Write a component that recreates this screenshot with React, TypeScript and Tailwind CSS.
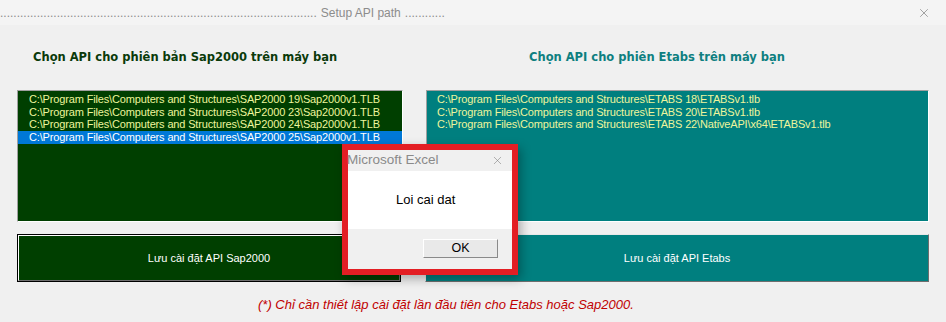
import { X } from 'lucide-react';

const sapPaths = [
  'C:\\Program Files\\Computers and Structures\\SAP2000 19\\Sap2000v1.TLB',
  'C:\\Program Files\\Computers and Structures\\SAP2000 23\\Sap2000v1.TLB',
  'C:\\Program Files\\Computers and Structures\\SAP2000 24\\Sap2000v1.TLB',
  'C:\\Program Files\\Computers and Structures\\SAP2000 25\\Sap2000v1.TLB',
];

const etabsPaths = [
  'C:\\Program Files\\Computers and Structures\\ETABS 18\\ETABSv1.tlb',
  'C:\\Program Files\\Computers and Structures\\ETABS 20\\ETABSv1.tlb',
  'C:\\Program Files\\Computers and Structures\\ETABS 22\\NativeAPI\\x64\\ETABSv1.tlb',
];

const MsgBox = () => (
  <div className="absolute left-[342px] top-[144px] w-[176px] border-[6px] border-[#e31e24] shadow-[3px_4px_10px_rgba(0,0,0,0.3)]">
    <div className="flex h-[21px] items-center justify-between bg-[#f0f0f0] pr-[8px] text-[13.5px] text-[#8a8a8a]">
      <span className="-ml-[1px]">Microsoft Excel</span>
      <X size={13} strokeWidth={1} color="#777" />
    </div>
    <div className="flex h-[58px] items-center bg-white pl-[48px] text-[13px] text-black">
      Loi cai dat
    </div>
    <div className="flex h-[40px] items-start justify-end bg-[#f0f0f0] pr-[14px] pt-[10px]">
      <div className="flex h-[19px] w-[75px] items-center justify-center border-t border-l border-t-white border-l-white border-b border-r border-b-[#8a8a8a] border-r-[#8a8a8a] bg-[#e9e9e9] text-[12.5px] text-black">
        OK
      </div>
    </div>
  </div>
);

export default function App() {
  return (
    <div
      className="relative flex h-[322px] w-[946px] flex-col overflow-hidden bg-[#f0f0f0]"
      style={{ fontFamily: '"Liberation Sans", Arial, sans-serif' }}
    >
      {/* title bar */}
      <div className="flex h-[25px] items-center justify-between bg-[#f4f4f4] pr-[15px] text-[12px] text-[#8c8c8c]">
        <div className="flex items-center whitespace-nowrap">
          <span>{'.'.repeat(95)}</span>
          <span className="px-[4px]">Setup API path</span>
          <span>{'.'.repeat(12)}</span>
        </div>
        <X size={14} strokeWidth={1} color="#666" />
      </div>

      <div className="px-[17px]">
        <div className="grid grid-cols-[386px_503px] gap-x-[23px]">
          {/* headings */}
          <div
            className="mt-[24px] h-[16px] pl-[16px] text-[11.5px] font-bold leading-[16px] text-[#0a3a0a]"
            style={{ fontFamily: '"DejaVu Sans", sans-serif' }}
          >
            Chọn API cho phiên bản Sap2000 trên máy bạn
          </div>
          <div
            className="mt-[24px] h-[16px] pl-[103px] text-[11.5px] font-bold leading-[16px] text-[#0e7f80]"
            style={{ fontFamily: '"DejaVu Sans", sans-serif' }}
          >
            Chọn API cho phiên Etabs trên máy bạn
          </div>

          {/* list boxes */}
          <div className="mt-[25px] h-[132px] border border-t-[#a0a0a0] border-l-[#a0a0a0] border-b-white border-r-white bg-[#003f00] pt-[2px] text-[11px] leading-[12.67px] tracking-[-0.15px] text-[#eef59c]">
            {sapPaths.map((p, i) => (
              <div
                key={p}
                className={`whitespace-nowrap pl-[11px] ${i === 3 ? 'bg-[#0078d7] text-white' : ''}`}
              >
                {p}
              </div>
            ))}
          </div>
          <div className="mt-[25px] h-[132px] border border-t-[#a0a0a0] border-l-[#a0a0a0] border-b-white border-r-white bg-[#007f7f] pt-[2px] text-[11px] leading-[12.67px] tracking-[-0.15px] text-[#eef59c]">
            {etabsPaths.map((p) => (
              <div key={p} className="whitespace-nowrap pl-[10px]">
                {p}
              </div>
            ))}
          </div>

          {/* buttons */}
          <div className="mt-[12px] h-[48px] w-[384px] border border-black">
            <div className="flex h-full items-center justify-center border border-t-white border-l-white border-b-[#6e6e6e] border-r-[#6e6e6e] bg-[#003f00] text-[11px] text-white">
              Lưu cài đặt API Sap2000
            </div>
          </div>
          <div className="mt-[12px] -ml-[1px] flex h-[48px] items-center justify-center border border-t-[#e8e8e8] border-l-[#e8e8e8] border-b-[#6e6e6e] border-r-[#6e6e6e] bg-[#007f7f] text-[11px] text-white">
            Lưu cài đặt API Etabs
          </div>
        </div>

        {/* footnote */}
        <div className="mt-[15px] h-[16px] pl-[241px] text-[13px] italic leading-[16px] text-[#c00000]">
          (*) Chỉ cần thiết lập cài đặt lần đầu tiên cho Etabs hoặc Sap2000.
        </div>
      </div>

      <MsgBox />
    </div>
  );
}
